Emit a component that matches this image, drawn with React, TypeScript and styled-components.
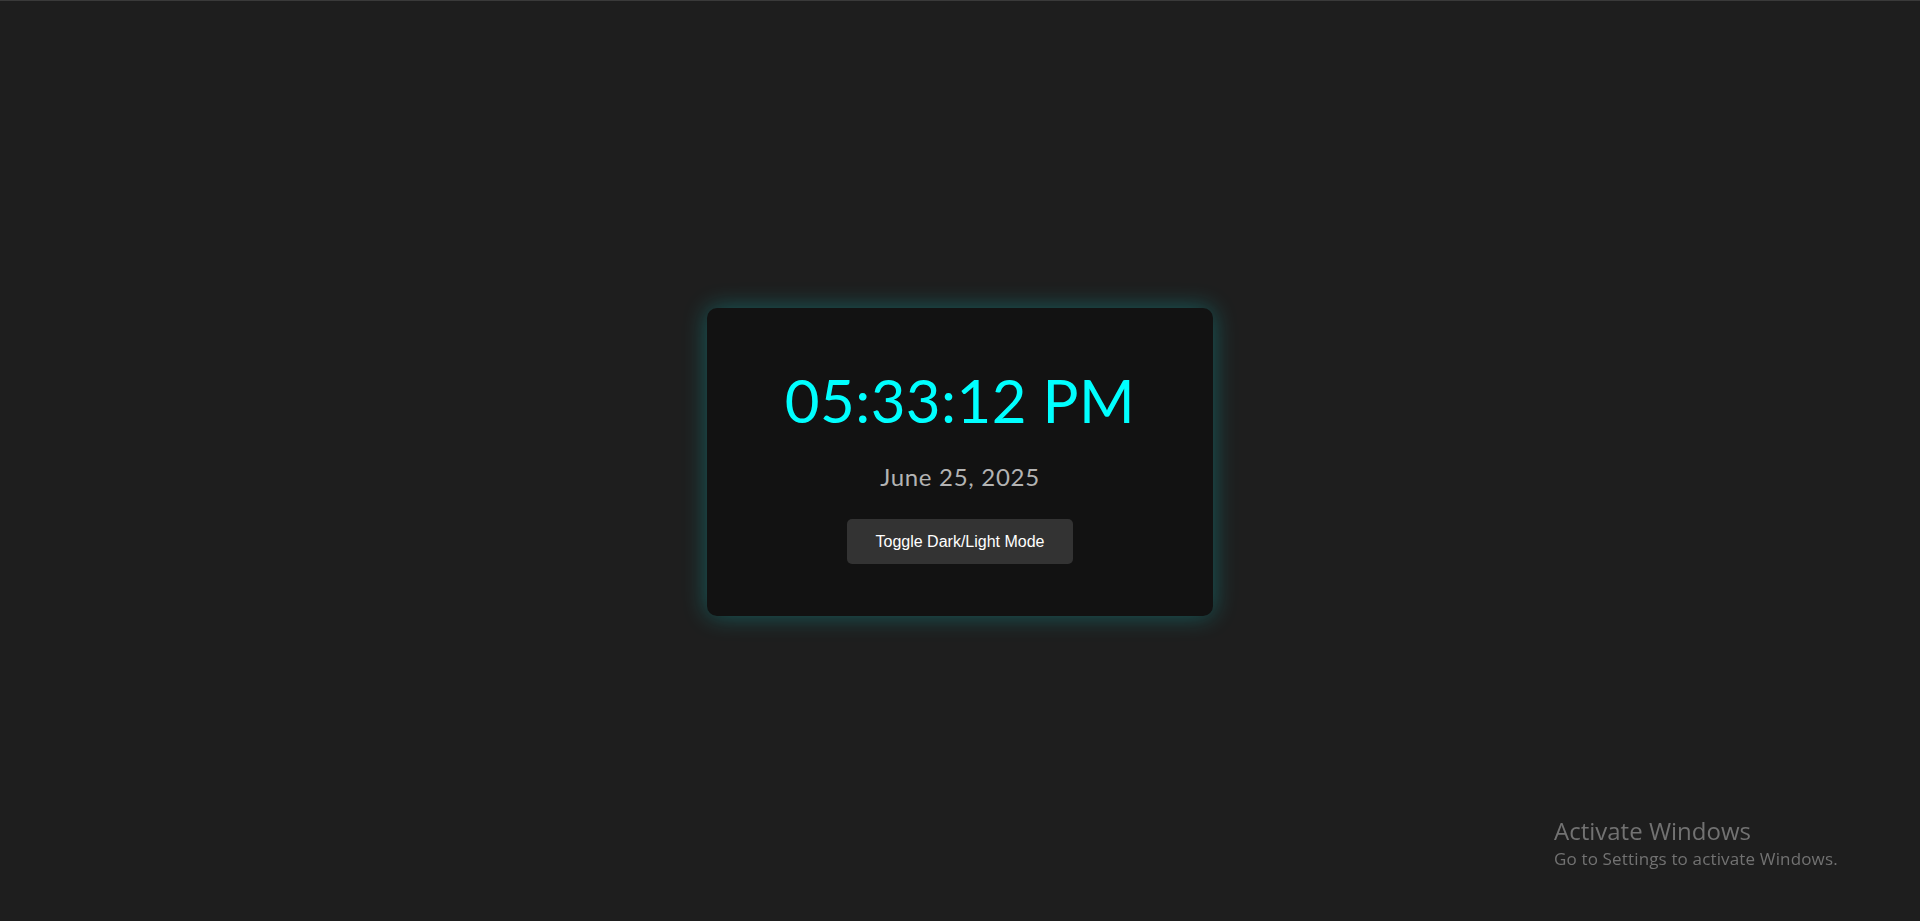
import React from 'react';
import styled, { createGlobalStyle } from 'styled-components';

const GlobalStyle = createGlobalStyle`
  html, body {
    margin: 0;
    padding: 0;
    background: #1e1e1e;
    overflow: hidden;
  }
`;

const Page = styled.div`
  box-sizing: border-box;
  height: 921px;
  border-top: 1px solid #3a3a3a;
  display: flex;
  align-items: center;
  justify-content: center;
  background: #1e1e1e;
`;

const Card = styled.div`
  box-sizing: border-box;
  width: 506px;
  height: 308px;
  margin-top: 2px;
  padding: 56px 0 50px;
  display: flex;
  flex-direction: column;
  align-items: center;
  background: #121212;
  border-radius: 10px;
  box-shadow: 0 0 24px rgba(0, 255, 255, 0.28);
`;

const Time = styled.h1`
  margin: 0;
  font-family: Lato, "Liberation Sans", sans-serif;
  font-weight: 400;
  font-size: 60px;
  line-height: 72px;
  letter-spacing: 0.4px;
  color: #00ffff;
`;

const DateLine = styled.p`
  margin: 26px 0 0;
  font-family: Lato, "Liberation Sans", sans-serif;
  font-size: 24px;
  line-height: 29px;
  letter-spacing: 0.7px;
  color: #b3b3b3;
`;

const ToggleButton = styled.button`
  margin-top: 28px;
  width: 226px;
  height: 45px;
  border: none;
  border-radius: 5px;
  background: #333333;
  color: #ffffff;
  font-family: "Liberation Sans", Arial, sans-serif;
  font-size: 16px;
  cursor: pointer;
`;

const Watermark = styled.div`
  position: fixed;
  left: 1554px;
  top: 815px;
  font-family: "Open Sans", "Noto Sans", sans-serif;
  color: #727272;
  pointer-events: none;
`;

const WatermarkTitle = styled.div`
  font-size: 24px;
  line-height: 32px;
`;

const WatermarkText = styled.div`
  font-size: 17px;
  line-height: 24px;
  letter-spacing: 0.15px;
`;

export default function App() {
  return (
    <>
      <GlobalStyle />
      <Page>
        <Card>
          <Time>05:33:12 PM</Time>
          <DateLine>June 25, 2025</DateLine>
          <ToggleButton>Toggle Dark/Light Mode</ToggleButton>
        </Card>
      </Page>
      <Watermark>
        <WatermarkTitle>Activate Windows</WatermarkTitle>
        <WatermarkText>Go to Settings to activate Windows.</WatermarkText>
      </Watermark>
    </>
  );
}
